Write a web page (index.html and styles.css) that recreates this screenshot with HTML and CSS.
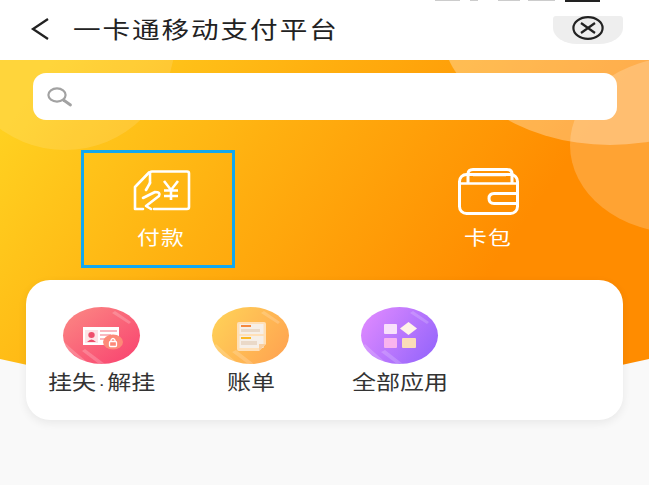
FILE: index.html
```html
<!DOCTYPE html>
<html lang="en">
<head>
    <meta charset="UTF-8">
    <title>一卡通移动支付平台</title>
    <link rel="stylesheet" href="styles.css">
</head>
<body>
    <div class="status-scrap">
        <span class="scrap scrap-a"></span>
        <span class="scrap scrap-b"></span>
        <span class="scrap scrap-c"></span>
        <span class="scrap scrap-d"></span>
        <span class="scrap scrap-e"></span>
    </div>
    <header class="top-bar">
        <svg class="back-icon" width="20" height="22" viewBox="0 0 20 22">
            <path d="M18 1 L3 11 L18 21" fill="none" stroke="#222" stroke-width="2.3"/>
        </svg>
        <h1 class="page-title">一卡通移动支付平台</h1>
        <div class="close-pill">
            <svg width="32" height="24" viewBox="0 0 32 24">
                <ellipse cx="16" cy="12" rx="14.6" ry="10.8" fill="none" stroke="#222" stroke-width="2.2"/>
                <path d="M9 7 L23 17 M23 7 L9 17" stroke="#222" stroke-width="2.2"/>
            </svg>
        </div>
    </header>

    <section class="hero">
        <div class="blob blob-left"></div>
        <div class="blob blob-top"></div>
        <div class="blob blob-right"></div>

        <div class="search-box">
            <svg width="27" height="22" viewBox="0 0 27 22">
                <ellipse cx="10" cy="9" rx="8.6" ry="6.6" fill="none" stroke="#a2a2a2" stroke-width="2.2"/>
                <path d="M16.5 14 L23.5 19" stroke="#a2a2a2" stroke-width="2.8" stroke-linecap="round"/>
            </svg>
        </div>

        <div class="main-actions">
            <div class="action action-pay">
                <svg width="58" height="42" viewBox="0 0 58 42">
                    <path d="M17 13 V3 Q17 1.5 19 1.5 H54 Q56 1.5 56 3.5 V37 Q56 39 54 39 H21" fill="none" stroke="#fff" stroke-width="2.6" stroke-linecap="round"/>
                    <path d="M16 2.5 L2 17 V39 H10" fill="none" stroke="#fff" stroke-width="2.6" stroke-linecap="round" stroke-linejoin="round"/>
                    <path d="M17 13 L13 20" fill="none" stroke="#fff" stroke-width="2.6" stroke-linecap="round"/>
                    <path d="M10 28 L22 22 Q28 22 26 26 L13 36 L18 39" fill="none" stroke="#fff" stroke-width="2.6" stroke-linecap="round" stroke-linejoin="round"/>
                    <path d="M31 11 L38 20 L45 11 M31 20.5 H45 M31 26 H45 M38 20 V30" fill="none" stroke="#fff" stroke-width="2.6"/>
                </svg>
                <span>付款</span>
            </div>
            <div class="action action-wallet">
                <svg width="61" height="47" viewBox="0 0 61 47">
                    <rect x="1.5" y="6.5" width="58" height="39" rx="7" fill="none" stroke="#fff" stroke-width="3"/>
                    <path d="M10 15 V6 Q10 1.5 15 1.5 H49 Q54 1.5 54 6 V15" fill="none" stroke="#fff" stroke-width="3"/>
                    <path d="M2 15.5 H59 M15 7 H48" fill="none" stroke="#fff" stroke-width="2.6"/>
                    <path d="M60 25.5 H36 Q31 25.5 31 30.5 Q31 35.5 36 35.5 H60" fill="none" stroke="#fff" stroke-width="3"/>
                </svg>
                <span>卡包</span>
            </div>
        </div>
    </section>

    <section class="app-card">
        <div class="app-item">
            <div class="app-icon icon-report">
                <svg width="77" height="57" viewBox="0 0 77 57">
                    <path d="M52 4 L68 15 L66 17 L49 6 Z M2 36 L24 55 L20 55 L0 39 Z M22 42 L42 57 L36 57 L19 44 Z" fill="#fff" opacity=".2"/>
                    <rect x="20" y="20" width="36" height="18" fill="#fff"/>
                    <rect x="22" y="23" width="13" height="13" fill="#fde3e6"/>
                    <ellipse cx="28.5" cy="28" rx="3.2" ry="3" fill="#ee4f6c"/>
                    <path d="M24 35 Q28.5 30 33 35 Z" fill="#ee4f6c"/>
                    <path d="M37 24 H54 M37 28 H48 M37 32 H44" stroke="#f9a0ac" stroke-width="1.6"/>
                    <ellipse cx="50" cy="35" rx="10" ry="7.5" fill="#fd8a78"/>
                    <rect x="46.5" y="34.5" width="7" height="5" rx="1" fill="none" stroke="#fff" stroke-width="1.3"/>
                    <path d="M48 34.5 V33 Q50 30 52 33 V34.5" fill="none" stroke="#fff" stroke-width="1.3"/>
                </svg>
            </div>
            <span class="app-label">挂失<i class="dot">·</i>解挂</span>
        </div>
        <div class="app-item">
            <div class="app-icon icon-bill">
                <svg width="77" height="57" viewBox="0 0 77 57">
                    <path d="M4 37 L24 55 L20 55 L1 40 Z M24 43 L42 57 L36 57 L20 45 Z M52 4 L68 15 L66 17 L49 6 Z" fill="#fff" opacity=".18"/>
                    <path d="M25 17 Q25 15 27 15 H52 Q54 15 54 17 V37 L47 44 H27 Q25 44 25 42 Z" fill="#ffe0b8"/>
                    <rect x="27.5" y="17" width="24" height="10" fill="#f6efe8"/>
                    <rect x="29" y="18" width="10" height="2" fill="#f5893f"/>
                    <rect x="29" y="22" width="19" height="3" fill="#ead9c8"/>
                    <rect x="27.5" y="29" width="24" height="12" fill="#f6efe8"/>
                    <rect x="29" y="30" width="10" height="2" fill="#fbb825"/>
                    <rect x="29" y="34" width="16" height="4" fill="#ead9c8"/>
                    <path d="M47 44 L47 37 L54 37 Z" fill="#f9cfa0"/>
                </svg>
            </div>
            <span class="app-label">账单</span>
        </div>
        <div class="app-item">
            <div class="app-icon icon-all">
                <svg width="77" height="57" viewBox="0 0 77 57">
                    <path d="M4 37 L24 55 L20 55 L1 40 Z M24 43 L42 57 L36 57 L20 45 Z M52 4 L68 15 L66 17 L49 6 Z" fill="#fff" opacity=".18"/>
                    <rect x="23" y="17" width="13" height="10" rx="1" fill="#f8e0fb"/>
                    <path d="M47.5 15 L56 21.5 L47.5 28 L39 21.5 Z" fill="#fff3e8"/>
                    <rect x="23" y="31" width="13" height="10" rx="1" fill="#f9b3ee"/>
                    <rect x="41" y="31" width="14" height="10" rx="1" fill="#fbdcb8"/>
                </svg>
            </div>
            <span class="app-label">全部应用</span>
        </div>
    </section>
</body>
</html>
```

FILE: styles.css
```css
html, body {
    margin: 0;
    padding: 0;
}
body {
    width: 649px;
    height: 485px;
    overflow: hidden;
    background-color: #f9f9f9;
    font-family: "Noto Sans CJK SC", "Liberation Sans", sans-serif;
}
.status-scrap {
    height: 2px;
    background-color: white;
    display: flex;
    padding-left: 435px;
}
.scrap {
    height: 1px;
    background-color: #ccc;
}
.scrap-a { width: 25px; }
.scrap-b { width: 8px; margin-left: 10px; }
.scrap-c { width: 22px; margin-left: 20px; }
.scrap-d { width: 27px; margin-left: 8px; }
.scrap-e { width: 35px; height: 2px; margin-left: 10px; background-color: #222; }
.top-bar {
    height: 58px;
    box-sizing: border-box;
    background-color: white;
    display: flex;
    align-items: flex-start;
    padding: 0 26px 0 30px;
}
.back-icon {
    margin-top: 16px;
}
.page-title {
    margin: 11px 0 0 23px;
    flex: 1;
    font-size: 23px;
    font-weight: 400;
    letter-spacing: 1.6px;
    line-height: 30px;
    color: #222;
    white-space: nowrap;
    transform: scaleX(1.2);
    transform-origin: left center;
}
.close-pill {
    width: 70px;
    height: 28px;
    margin-top: 14px;
    padding-bottom: 4px;
    box-sizing: border-box;
    border-radius: 3px 3px 24px 24px / 3px 3px 16px 16px;
    background-color: #eeeeee;
    display: flex;
    align-items: center;
    justify-content: center;
}
.hero {
    position: relative;
    height: 340px;
    padding: 13px 32px 0 33px;
    box-sizing: border-box;
    overflow: hidden;
    clip-path: path('M0 0 H649 V299 Q324.5 374 0 299 Z');
    background: linear-gradient(125deg, #ffd020 6%, #ffb010 36%, #ff8c00 72%);
}
.blob {
    position: absolute;
    border-radius: 50%;
    background-color: rgba(255, 255, 255, 0.12);
}
.blob-left {
    left: -45px;
    top: -130px;
    width: 220px;
    height: 220px;
}
.blob-top {
    left: 440px;
    top: -165px;
    width: 340px;
    height: 250px;
    background-color: rgba(255, 255, 255, 0.3);
}
.blob-right {
    left: 570px;
    top: -3px;
    width: 220px;
    height: 176px;
    background-color: rgba(255, 255, 255, 0.2);
}
.search-box {
    position: relative;
    height: 47px;
    width: 584px;
    border-radius: 13px;
    background-color: white;
    display: flex;
    align-items: center;
    padding-left: 14px;
    box-sizing: border-box;
}
.main-actions {
    position: relative;
    display: flex;
    margin: 30px 0 0 48px;
}
.action {
    width: 154px;
    height: 118px;
    box-sizing: border-box;
    display: flex;
    flex-direction: column;
    align-items: center;
    color: white;
    font-size: 19px;
    line-height: 26px;
}
.action span {
    letter-spacing: 1px;
    transform: scaleX(1.2);
}
.action-pay {
    border: 3px solid #12a8f0;
    padding: 17px 0 0 7px;
}
.action-pay span {
    margin-top: 12px;
}
.action-wallet {
    margin-left: 176px;
    padding-top: 18px;
}
.action-wallet span {
    margin-top: 9px;
}
.app-card {
    position: relative;
    margin: -120px 0 0 26px;
    width: 597px;
    height: 140px;
    box-sizing: border-box;
    padding: 27px 0 0 37px;
    background-color: white;
    border-radius: 24px;
    box-shadow: 0 3px 10px rgba(0, 0, 0, 0.07);
    display: flex;
    gap: 72px;
}
.app-item {
    width: 77px;
    display: flex;
    flex-direction: column;
    align-items: center;
    color: #333;
    font-size: 20px;
    line-height: 26px;
    white-space: nowrap;
}
.app-label {
    margin-top: 5px;
    transform: scaleX(1.2);
}
.dot {
    font-family: "Liberation Sans", sans-serif;
    font-style: normal;
    font-size: 16px;
    margin: 0 2px;
}
.app-icon {
    width: 77px;
    height: 57px;
    border-radius: 50%;
    overflow: hidden;
}
.app-icon svg {
    display: block;
}
.icon-report {
    background: linear-gradient(145deg, #fb8a84, #f9406f);
}
.icon-bill {
    background: linear-gradient(125deg, #ffd458, #ffa050);
}
.icon-all {
    background: linear-gradient(125deg, #e48cff, #8f62fb);
}
```
